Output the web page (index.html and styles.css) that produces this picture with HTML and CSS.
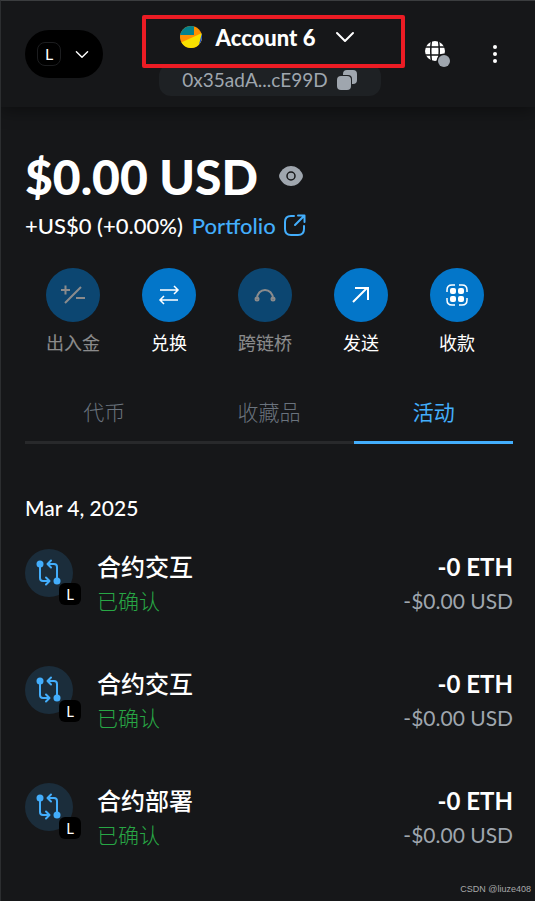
FILE: index.html
```html
<!DOCTYPE html>
<html lang="zh-CN">
<head>
    <meta charset="UTF-8">
    <meta name="viewport" content="width=device-width, initial-scale=1.0">
    <title>Account 6</title>
    <link rel="stylesheet" href="styles.css">
</head>
<body>
    <svg class="symbols" aria-hidden="true">
        <symbol id="chevron" viewBox="0 0 20 12">
            <path d="M2 2l8 8 8-8" fill="none" stroke="currentColor" stroke-width="2" stroke-linecap="round" stroke-linejoin="round"/>
        </symbol>
        <symbol id="contract" viewBox="0 0 26 28">
            <g fill="none" stroke="currentColor" stroke-width="2" stroke-linecap="round" stroke-linejoin="round">
                <path d="M4 5v14q0 3 3 3h6M10 18.500l3.500 3.500-3.500 3.500M21 21V8q0-3-3-3h-6M15 1.500L11.500 5 15 8.500"/>
            </g>
            <circle cx="4" cy="5" r="3.500" fill="currentColor"/>
            <circle cx="21" cy="22" r="3.500" fill="currentColor"/>
        </symbol>
    </svg>

    <header class="header">
        <button type="button" class="network-btn" aria-label="Network">
            <span class="network-icon">L</span>
            <svg class="chevron-small"><use href="#chevron"/></svg>
        </button>

        <div class="account">
            <button type="button" class="account-btn">
                <svg class="avatar" viewBox="0 0 22 22">
                    <clipPath id="avatar-clip"><circle cx="11" cy="11" r="11"/></clipPath>
                    <g clip-path="url(#avatar-clip)">
                        <rect width="22" height="22" fill="#ff9000"/>
                        <path d="M0 0h14v9H0z" fill="#04828c"/>
                        <path d="M0 17L22 7v15H0z" fill="#f8e000"/>
                        <path d="M22 7l-4 15h4z" fill="#1a4fd0"/>
                    </g>
                </svg>
                <span>Account 6</span>
                <svg class="chevron"><use href="#chevron"/></svg>
            </button>
            <button type="button" class="address-btn">
                <span>0x35adA...cE99D</span>
                <svg class="copy-icon" viewBox="0 0 20 20" fill="currentColor">
                    <path d="M10 0h6a4 4 0 0 1 4 4v6a4 4 0 0 1-4 4h-1V9a4 4 0 0 0-4-4H6V4a4 4 0 0 1 4-4z"/>
                    <rect x="0" y="6" width="14" height="14" rx="4"/>
                </svg>
            </button>
        </div>

        <div class="header-actions">
            <button type="button" class="icon-btn" aria-label="Connected sites">
                <svg class="globe-icon" viewBox="0 0 26 28">
                    <circle cx="10" cy="11" r="10" fill="#fff"/>
                    <path d="M0 7h20M0 15h20M6.500 0q-1.500 11 0 22M13.500 0q1.500 11 0 22" fill="none" stroke="#161719" stroke-width="1.500"/>
                    <circle cx="19" cy="21" r="7.500" fill="#161719"/>
                    <circle cx="19" cy="21" r="6" fill="#9fa6ae"/>
                </svg>
            </button>
            <button type="button" class="icon-btn" aria-label="Menu">
                <svg class="menu-icon" viewBox="0 0 4 18" fill="#fff">
                    <circle cx="2" cy="2" r="2"/>
                    <circle cx="2" cy="9" r="2"/>
                    <circle cx="2" cy="16" r="2"/>
                </svg>
            </button>
        </div>
    </header>

    <main class="main">
        <section class="balance">
            <div class="balance-row">
                <h1>$0.00 USD</h1>
                <button type="button" class="icon-btn" aria-label="Hide balance">
                    <svg class="eye-icon" viewBox="0 0 24 20">
                        <path d="M12 0c5 0 9 3 11.500 8q.8 2 0 4C21 17 17 20 12 20S3 17 .5 12q-.8-2 0-4C3 3 7 0 12 0z" fill="#9fa6ae"/>
                        <circle cx="12" cy="10" r="4" fill="none" stroke="#161719" stroke-width="1.500"/>
                    </svg>
                </button>
            </div>
            <div class="change-row">
                <span>+US$0 (+0.00%)</span>
                <a href="#" class="portfolio-link">Portfolio
                    <svg class="export-icon" viewBox="0 0 22 22" fill="none" stroke="currentColor" stroke-width="2" stroke-linecap="round" stroke-linejoin="round">
                        <path d="M10 2H7Q1 2 1 8v7q0 6 6 6h7q6 0 6-6v-3M11 11L20 2M14 1.500h6.500V8"/>
                    </svg>
                </a>
            </div>
        </section>

        <nav class="actions">
            <button type="button" class="action" disabled>
                <span class="action-icon">
                    <svg viewBox="0 0 28 28" fill="none" stroke="currentColor" stroke-width="2">
                        <path d="M2 9h9M6.500 4.500v9M6 22L22 6M17 17h9"/>
                    </svg>
                </span>
                出入金
            </button>
            <button type="button" class="action">
                <span class="action-icon">
                    <svg viewBox="0 0 28 28" fill="none" stroke="currentColor" stroke-width="1.500">
                        <path d="M5 9h18M19 5l4 4-4 4M23 19H5M9 15l-4 4 4 4"/>
                    </svg>
                </span>
                兑换
            </button>
            <button type="button" class="action" disabled>
                <span class="action-icon">
                    <svg viewBox="0 0 28 28" fill="none" stroke="currentColor" stroke-width="2">
                        <path d="M6 18c0-12 16-12 16 0"/>
                        <circle cx="6" cy="18" r="1.500"/>
                        <circle cx="22" cy="18" r="1.500"/>
                    </svg>
                </span>
                跨链桥
            </button>
            <button type="button" class="action">
                <span class="action-icon">
                    <svg viewBox="0 0 28 28" fill="none" stroke="currentColor" stroke-width="2">
                        <path d="M6 21L20 7M8 7h13v12"/>
                    </svg>
                </span>
                发送
            </button>
            <button type="button" class="action">
                <span class="action-icon">
                    <svg viewBox="0 0 28 28" fill="none" stroke="currentColor" stroke-width="1.500">
                        <path d="M4 11V9q0-5 5-5h3M16 4h3q5 0 5 5v2M24 17v2q0 5-5 5h-3M12 24H9q-5 0-5-5v-2"/>
                        <g fill="currentColor" stroke="none">
                            <rect x="7" y="7" width="6" height="6" rx="2"/>
                            <rect x="15" y="7" width="6" height="6" rx="2"/>
                            <rect x="7" y="15" width="6" height="6" rx="2"/>
                            <rect x="15" y="15" width="6" height="6" rx="2"/>
                        </g>
                    </svg>
                </span>
                收款
            </button>
        </nav>

        <div class="tabs" role="tablist">
            <button type="button" class="tab" role="tab">代币</button>
            <button type="button" class="tab" role="tab">收藏品</button>
            <button type="button" class="tab active" role="tab" aria-selected="true">活动</button>
        </div>

        <section class="activity">
            <h2>Mar 4, 2025</h2>
            <ul class="activity-list">
                <li class="activity-item">
                    <span class="activity-icon">
                        <svg><use href="#contract"/></svg>
                        <span class="badge">L</span>
                    </span>
                    <div class="activity-info">
                        <p class="activity-title">合约交互</p>
                        <p class="activity-status">已确认</p>
                    </div>
                    <div class="activity-amount">
                        <p class="activity-title">-0 ETH</p>
                        <p class="activity-fiat">-$0.00 USD</p>
                    </div>
                </li>
                <li class="activity-item">
                    <span class="activity-icon">
                        <svg><use href="#contract"/></svg>
                        <span class="badge">L</span>
                    </span>
                    <div class="activity-info">
                        <p class="activity-title">合约交互</p>
                        <p class="activity-status">已确认</p>
                    </div>
                    <div class="activity-amount">
                        <p class="activity-title">-0 ETH</p>
                        <p class="activity-fiat">-$0.00 USD</p>
                    </div>
                </li>
                <li class="activity-item">
                    <span class="activity-icon">
                        <svg><use href="#contract"/></svg>
                        <span class="badge">L</span>
                    </span>
                    <div class="activity-info">
                        <p class="activity-title">合约部署</p>
                        <p class="activity-status">已确认</p>
                    </div>
                    <div class="activity-amount">
                        <p class="activity-title">-0 ETH</p>
                        <p class="activity-fiat">-$0.00 USD</p>
                    </div>
                </li>
            </ul>
        </section>
    </main>

    <footer class="watermark">CSDN @liuze408</footer>
</body>
</html>
```
FILE: styles.css
```css
* {
    box-sizing: border-box;
}
body {
    margin: 0;
    min-height: 100vh;
    display: flex;
    flex-direction: column;
    background-color: #161719;
    border-top: 1px solid #3b3d3f;
    border-left: 1px solid #2c2e30;
    color: #fff;
    font-family: Lato, 'Noto Sans CJK SC', sans-serif;
}
h1, h2, p, ul {
    margin: 0;
    padding: 0;
}
button {
    padding: 0;
    border: none;
    background: none;
    color: inherit;
    font-family: inherit;
    cursor: pointer;
}
svg {
    display: block;
    flex-shrink: 0;
}
.symbols {
    position: absolute;
    width: 0;
    height: 0;
}

/* header */
.header {
    display: flex;
    align-items: center;
    height: 106px;
    padding: 0 38px 0 24px;
    box-shadow: 0 4px 16px rgba(0, 0, 0, 0.4);
}
.network-btn {
    display: flex;
    align-items: center;
    justify-content: space-between;
    width: 78px;
    height: 48px;
    padding: 0 14px 0 12px;
    border-radius: 24px;
    background: #000;
}
.network-icon {
    width: 24px;
    height: 24px;
    border: 1px solid #1c1d1f;
    border-radius: 8px;
    font-size: 16px;
    line-height: 22px;
    text-align: center;
}
.chevron-small {
    width: 14px;
    height: 9px;
}
.chevron {
    width: 20px;
    height: 12px;
}
.account {
    flex: 1;
    display: flex;
    flex-direction: column;
    align-items: center;
    margin: 2px 20px 0 39px;
}
.account-btn {
    position: relative;
    z-index: 1;
    display: flex;
    align-items: center;
    justify-content: center;
    width: 100%;
    height: 53px;
    padding: 0 12px 8px 0;
    border: 4px solid #ec1c24;
    border-radius: 2px;
    background: #161719;
    font-size: 22px;
    font-weight: 900;
}
.avatar {
    width: 22px;
    height: 22px;
    margin-right: 14px;
}
.account-btn .chevron {
    margin-left: 20px;
}
.address-btn {
    display: flex;
    align-items: center;
    justify-content: center;
    gap: 9px;
    width: 222px;
    height: 32px;
    margin: -4px 8px 0 0;
    border-radius: 12px;
    background: #1e2124;
    color: #9fa6ae;
    font-size: 19px;
}
.copy-icon {
    width: 20px;
    height: 20px;
}
.header-actions {
    display: flex;
    align-items: center;
    gap: 42px;
}
.globe-icon {
    width: 26px;
    height: 28px;
}
.menu-icon {
    width: 4px;
    height: 18px;
}

/* balance */
.main {
    flex: 1;
    padding: 39px 22px 0 24px;
}
.balance-row {
    display: flex;
    align-items: center;
    gap: 21px;
    height: 60px;
}
h1 {
    font-size: 48px;
    font-weight: 900;
}
.eye-icon {
    width: 24px;
    height: 20px;
}
.change-row {
    display: flex;
    align-items: center;
    gap: 9px;
    height: 30px;
    margin-top: 4px;
    font-size: 22px;
    font-weight: 500;
}
.portfolio-link {
    display: flex;
    align-items: center;
    gap: 8px;
    color: #43aefc;
    text-decoration: none;
}
.export-icon {
    width: 22px;
    height: 22px;
}

/* action buttons */
.actions {
    display: grid;
    grid-template-columns: repeat(5, 1fr);
    margin: 28px 8px 0 0;
}
.action {
    display: flex;
    flex-direction: column;
    align-items: center;
    gap: 8px;
    font-size: 18px;
    line-height: 26px;
}
.action:disabled {
    color: #fff;
    opacity: 0.5;
    cursor: default;
}
.action-icon {
    display: flex;
    align-items: center;
    justify-content: center;
    width: 54px;
    height: 54px;
    border-radius: 50%;
    background: #0376c9;
}
.action-icon svg {
    width: 28px;
    height: 28px;
}

/* tabs */
.tabs {
    display: grid;
    grid-template-columns: 13fr 14fr 13fr;
    margin-top: 28px;
}
.tab {
    height: 60px;
    padding-bottom: 4px;
    border-bottom: 3px solid #28292b;
    color: #6a737d;
    font-size: 21px;
    font-weight: 300;
}
.tab.active {
    border-color: #43aefc;
    color: #43aefc;
    font-weight: 400;
}

/* activity */
.activity {
    padding-top: 49px;
}
h2 {
    font-size: 21px;
    font-weight: 500;
    line-height: 30px;
}
.activity-list {
    list-style: none;
}
.activity-item {
    display: flex;
    gap: 24px;
    height: 117px;
    padding-top: 26px;
}
.activity-icon {
    position: relative;
    display: flex;
    align-items: center;
    justify-content: center;
    width: 48px;
    height: 48px;
    border-radius: 50%;
    background: #1b2d3b;
    color: #43aefc;
}
.activity-icon svg {
    width: 26px;
    height: 28px;
}
.badge {
    position: absolute;
    right: -8px;
    bottom: -8px;
    width: 22px;
    height: 22px;
    border-radius: 6px;
    background: #000;
    color: #fff;
    font-size: 15px;
    line-height: 22px;
    text-align: center;
}
.activity-info {
    flex: 1;
}
.activity-amount {
    text-align: right;
}
.activity-title {
    font-size: 24px;
    font-weight: 500;
    line-height: 36px;
}
.activity-amount .activity-title {
    font-weight: 700;
}
.activity-status,
.activity-fiat {
    font-size: 21px;
    line-height: 32px;
}
.activity-status {
    color: #28a745;
    font-weight: 300;
}
.activity-fiat {
    color: #9fa6ae;
}
.watermark {
    padding: 0 4px 6px 0;
    color: #a8a9aa;
    font-family: 'Liberation Sans', sans-serif;
    font-size: 9px;
    line-height: 12px;
    text-align: right;
}
```
